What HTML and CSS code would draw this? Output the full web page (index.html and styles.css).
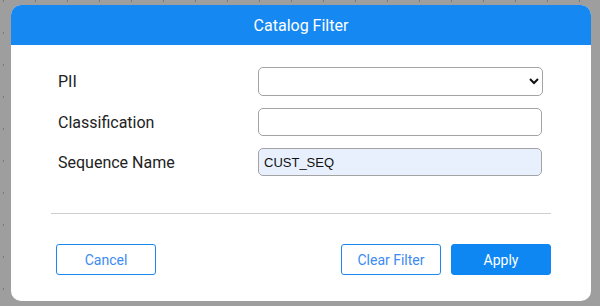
FILE: index.html
```html
<!DOCTYPE html>
<html>
<head>
<meta charset="utf-8">
<link rel="stylesheet" href="styles.css">
</head>
<body>
<div class="dialog">
  <div class="header">Catalog Filter</div>
  <div class="body">
    <div class="form">
      <label class="label">PII</label>
      <select class="field select"><option></option></select>
      <label class="label">Classification</label>
      <input class="field" type="text" value="">
      <label class="label">Sequence Name</label>
      <input class="field filled" type="text" value="CUST_SEQ">
    </div>
    <hr class="divider">
    <div class="actions">
      <button class="btn outline">Cancel</button>
      <div class="right">
        <button class="btn outline">Clear Filter</button>
        <button class="btn primary">Apply</button>
      </div>
    </div>
  </div>
</div>
</body>
</html>
```
FILE: styles.css
```css
html, body {
  margin: 0;
  height: 100%;
}
body {
  background-color: #9e9e9e;
  background-image: radial-gradient(0.9px 1.3px at 3.5px 1px, #7a7a7a 98%, transparent 100%);
  background-size: 32px 32px;
  background-repeat: repeat;
  font-family: Roboto, "Liberation Sans", sans-serif;
  padding: 5px 9px 5px 11px;
  box-sizing: border-box;
}
.dialog {
  width: 580px;
  height: 296px;
  background: #fff;
  border-radius: 10px;
  overflow: hidden;
  display: flex;
  flex-direction: column;
}
.header {
  height: 40px;
  background: #1588f1;
  color: #fff;
  font-size: 16px;
  display: flex;
  align-items: center;
  justify-content: center;
}
.body {
  padding: 22px 40px 0 40px;
}
.form {
  display: grid;
  grid-template-columns: 200px 285px;
  row-gap: 12px;
  padding-left: 7px;
  align-items: center;
}
.label {
  font-size: 16px;
  color: #222;
}
.field {
  box-sizing: border-box;
  height: 28px;
  width: 284px;
  border: 1px solid #a3a3a3;
  border-radius: 5px;
  background: #fff;
  font-family: "Liberation Sans", Arial, sans-serif;
  font-size: 13px;
  color: #111;
  padding: 0 5px;
  margin: 0;
}
.select {
  height: 29px;
  width: 285px;
}
.filled {
  background: #e8f0fe;
}
.divider {
  border: 0;
  border-top: 1px solid #cfcfcf;
  margin: 37px 0 0 0;
}
.actions {
  display: flex;
  justify-content: space-between;
  margin-top: 30px;
  padding-left: 5px;
}
.right {
  display: flex;
  gap: 10px;
}
.btn {
  box-sizing: border-box;
  width: 100px;
  height: 31px;
  border-radius: 3px;
  font-family: Roboto, sans-serif;
  font-size: 14px;
  cursor: pointer;
}
.outline {
  background: #fff;
  border: 1px solid #1a88f0;
  color: #3d8af2;
}
.primary {
  background: #0e87f3;
  border: 1px solid #0e87f3;
  color: #fff;
}
```
